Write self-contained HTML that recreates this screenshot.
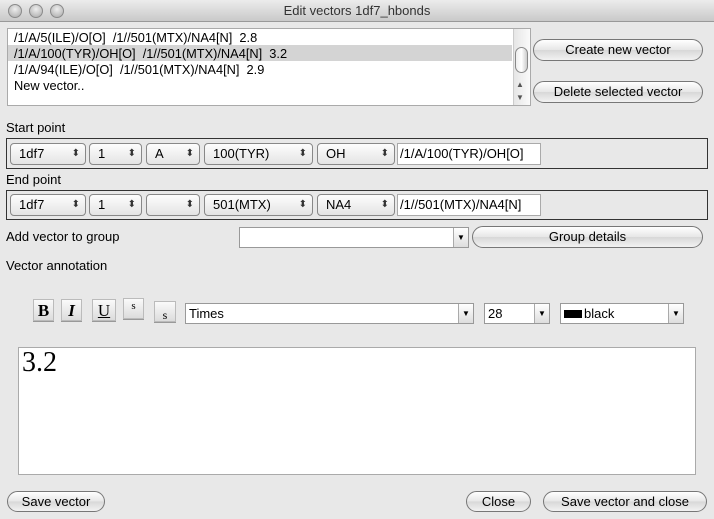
<!DOCTYPE html>
<html><head><style>
*{box-sizing:border-box;margin:0;padding:0}
body{width:714px;height:519px;background:#e8e8e8;font-family:"Liberation Sans",sans-serif;font-size:13px;color:#000;position:relative;overflow:hidden}
.a{position:absolute}
.title{left:0;top:0;width:714px;height:22px;background:linear-gradient(#ececec,#c9c9c9);border-bottom:1px solid #999;text-align:center;line-height:22px;font-size:13px;color:#333}
.dot{top:4px;width:14px;height:14px;border-radius:50%;background:radial-gradient(circle at 50% 35%,#eee,#a8a8a8);border:1px solid #8a8a8a}
.btn{border:1px solid #777;border-radius:11px;background:linear-gradient(#fff,#e6e6e6 50%,#d8d8d8 51%,#f2f2f2);text-align:center;font-size:13px;line-height:20px}
.cb{border:1px solid #888;border-radius:4px;background:linear-gradient(#fdfdfd,#e4e4e4);height:22px;line-height:20px;padding-left:8px;font-size:13px}
.cb:after{content:"⬍";position:absolute;right:5px;top:0;font-size:10px;color:#333}
.grp{border:1px solid #333;background:#e8e8e8}
.tf{background:#fff;border:1px solid #aaa;padding-left:2px;line-height:20px}
.sb{background:#fff;border:1px solid #999;height:21px;line-height:19px;padding-left:3px}
.dd{border-left:1px solid #aaa;background:linear-gradient(#fff,#ddd);width:15px;text-align:center;font-size:8px;line-height:19px}
.fb{border:1px solid #bbb;background:linear-gradient(#fafafa,#dcdcdc);font-family:"Liberation Serif",serif;text-align:center;box-shadow:0 1px 0 #999}
</style></head><body>
<div class="a title">Edit vectors 1df7_hbonds</div>
<div class="a dot" style="left:8px"></div><div class="a dot" style="left:29px"></div><div class="a dot" style="left:50px"></div>

<div class="a" style="left:7px;top:28px;width:524px;height:78px;background:#fff;border:1px solid #aaa"></div>
<div class="a" style="left:8px;top:45px;width:504px;height:16px;background:#d4d4d4"></div>
<div class="a" style="left:14px;top:30px;line-height:16px;font-size:12.8px">/1/A/5(ILE)/O[O]&nbsp; /1//501(MTX)/NA4[N]&nbsp; 2.8<br>/1/A/100(TYR)/OH[O]&nbsp; /1//501(MTX)/NA4[N]&nbsp; 3.2<br>/1/A/94(ILE)/O[O]&nbsp; /1//501(MTX)/NA4[N]&nbsp; 2.9<br>New vector..</div>
<div class="a" style="left:513px;top:29px;width:17px;height:76px;background:linear-gradient(90deg,#e6e6e6,#fafafa);border-left:1px solid #ccc"></div>
<div class="a" style="left:515px;top:47px;width:13px;height:26px;border:1px solid #888;border-radius:7px;background:linear-gradient(90deg,#eee,#fff,#ccc)"></div>
<div class="a" style="left:516px;top:78px;font-size:8px;line-height:13px;color:#555">▲<br>▼</div>
<div class="a btn" style="left:533px;top:39px;width:170px;height:22px">Create new vector</div>
<div class="a btn" style="left:533px;top:81px;width:170px;height:22px">Delete selected vector</div>

<div class="a" style="left:6px;top:120px">Start point</div>
<div class="a grp" style="left:6px;top:138px;width:702px;height:31px"></div>
<div class="a cb" style="left:10px;top:143px;width:76px">1df7</div>
<div class="a cb" style="left:89px;top:143px;width:53px">1</div>
<div class="a cb" style="left:146px;top:143px;width:54px">A</div>
<div class="a cb" style="left:204px;top:143px;width:109px">100(TYR)</div>
<div class="a cb" style="left:317px;top:143px;width:78px">OH</div>
<div class="a tf" style="left:397px;top:143px;width:144px;height:22px">/1/A/100(TYR)/OH[O]</div>

<div class="a" style="left:6px;top:172px">End point</div>
<div class="a grp" style="left:6px;top:190px;width:702px;height:30px"></div>
<div class="a cb" style="left:10px;top:194px;width:76px">1df7</div>
<div class="a cb" style="left:89px;top:194px;width:53px">1</div>
<div class="a cb" style="left:146px;top:194px;width:54px"></div>
<div class="a cb" style="left:204px;top:194px;width:109px">501(MTX)</div>
<div class="a cb" style="left:317px;top:194px;width:78px">NA4</div>
<div class="a tf" style="left:397px;top:194px;width:144px;height:22px">/1//501(MTX)/NA4[N]</div>

<div class="a" style="left:6px;top:229px">Add vector to group</div>
<div class="a sb" style="left:239px;top:227px;width:230px"></div>
<div class="a dd" style="left:453px;top:228px">▼</div>
<div class="a btn" style="left:472px;top:226px;width:231px;height:22px">Group details</div>
<div class="a" style="left:6px;top:258px">Vector annotation</div>

<div class="a fb" style="left:33px;top:299px;width:21px;height:22px;font-weight:bold;font-size:17px;line-height:22px">B</div>
<div class="a fb" style="left:61px;top:299px;width:21px;height:22px;font-style:italic;font-weight:bold;font-size:17px;line-height:22px">I</div>
<div class="a fb" style="left:92px;top:299px;width:24px;height:22px;text-decoration:underline;font-size:17px;line-height:22px">U</div>
<div class="a fb" style="left:123px;top:298px;width:21px;height:21px;font-size:11px;line-height:14px">s</div>
<div class="a fb" style="left:154px;top:301px;width:22px;height:21px;font-size:12px;line-height:26px">s</div>
<div class="a sb" style="left:185px;top:303px;width:289px">Times</div>
<div class="a dd" style="left:458px;top:304px">▼</div>
<div class="a sb" style="left:484px;top:303px;width:66px">28</div>
<div class="a dd" style="left:534px;top:304px">▼</div>
<div class="a sb" style="left:560px;top:303px;width:124px"><span style="display:inline-block;width:18px;height:8px;background:#000;margin-right:2px"></span>black</div>
<div class="a dd" style="left:668px;top:304px">▼</div>

<div class="a" style="left:18px;top:347px;width:678px;height:128px;background:#fff;border:1px solid #aaa"></div>
<div class="a" style="left:22px;top:347px;font-family:'Liberation Serif',serif;font-size:28px">3.2</div>

<div class="a btn" style="left:7px;top:491px;width:98px;height:21px">Save vector</div>
<div class="a btn" style="left:466px;top:491px;width:65px;height:21px">Close</div>
<div class="a btn" style="left:543px;top:491px;width:164px;height:21px">Save vector and close</div>
</body></html>
